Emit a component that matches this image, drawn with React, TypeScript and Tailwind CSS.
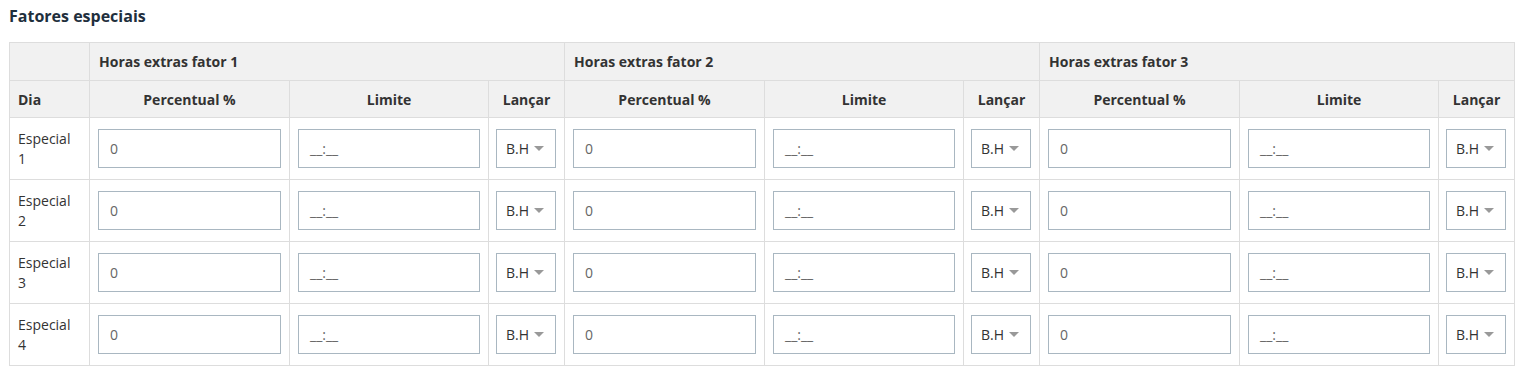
import React from "react";

const fatores = [1, 2, 3];
const rows = [1, 2, 3, 4];

function Select() {
  return (
    <div className="flex h-[39px] w-[60px] items-center border border-[#a9b7c1] bg-white pl-[9px] pr-[8px] text-[14px] text-[#333]">
      <span>B.H</span>
      <span className="ml-[5px] inline-block h-0 w-0 border-l-[5px] border-r-[5px] border-t-[5px] border-l-transparent border-r-transparent border-t-[#999]"></span>
    </div>
  );
}

function Input({ value }: { value: string }) {
  return (
    <div className="flex h-[39px] w-full items-center border border-[#a9b7c1] bg-white pl-[11px] text-[14px] text-[#666]">
      {value}
    </div>
  );
}

export default function App() {
  return (
    <div className="bg-white px-[9px] pt-[5px] pb-[10px] font-['Open_Sans',sans-serif] text-[14px] text-[#333]">
      <h2 className="mb-[15px] text-[16px] font-bold leading-[22px] text-[#1f2f3d]">Fatores especiais</h2>
      <table className="w-[1506px] table-fixed border-collapse border border-[#ddd]">
        <colgroup>
          <col className="w-[80px]" />
          {fatores.map((f) => (
            <React.Fragment key={f}>
              <col className="w-[200px]" />
              <col className="w-[199px]" />
              <col className="w-[76px]" />
            </React.Fragment>
          ))}
        </colgroup>
        <thead>
          <tr className="h-[38px] bg-[#f1f1f1]">
            <th className="border border-[#ddd]"></th>
            {fatores.map((f) => (
              <th key={f} colSpan={3} className="border border-[#ddd] pl-[9px] text-left font-bold">
                Horas extras fator {f}
              </th>
            ))}
          </tr>
          <tr className="h-[37px] bg-[#f1f1f1]">
            <th className="border border-[#ddd] pl-[8px] text-left font-bold">Dia</th>
            {fatores.map((f) => (
              <React.Fragment key={f}>
                <th className="border border-[#ddd] text-center font-bold">Percentual %</th>
                <th className="border border-[#ddd] text-center font-bold">Limite</th>
                <th className="border border-[#ddd] text-center font-bold">Lançar</th>
              </React.Fragment>
            ))}
          </tr>
        </thead>
        <tbody>
          {rows.map((r) => (
            <tr key={r} className="h-[62px]">
              <td className="border border-[#ddd] pl-[8px] align-middle leading-[20px]">
                Especial
                <br />
                {r}
              </td>
              {fatores.map((f) => (
                <React.Fragment key={f}>
                  <td className="border border-[#ddd] px-[8px] align-middle">
                    <Input value="0" />
                  </td>
                  <td className="border border-[#ddd] px-[8px] align-middle">
                    <Input value="__:__" />
                  </td>
                  <td className="border border-[#ddd] px-[7px] align-middle">
                    <Select />
                  </td>
                </React.Fragment>
              ))}
            </tr>
          ))}
        </tbody>
      </table>
    </div>
  );
}
